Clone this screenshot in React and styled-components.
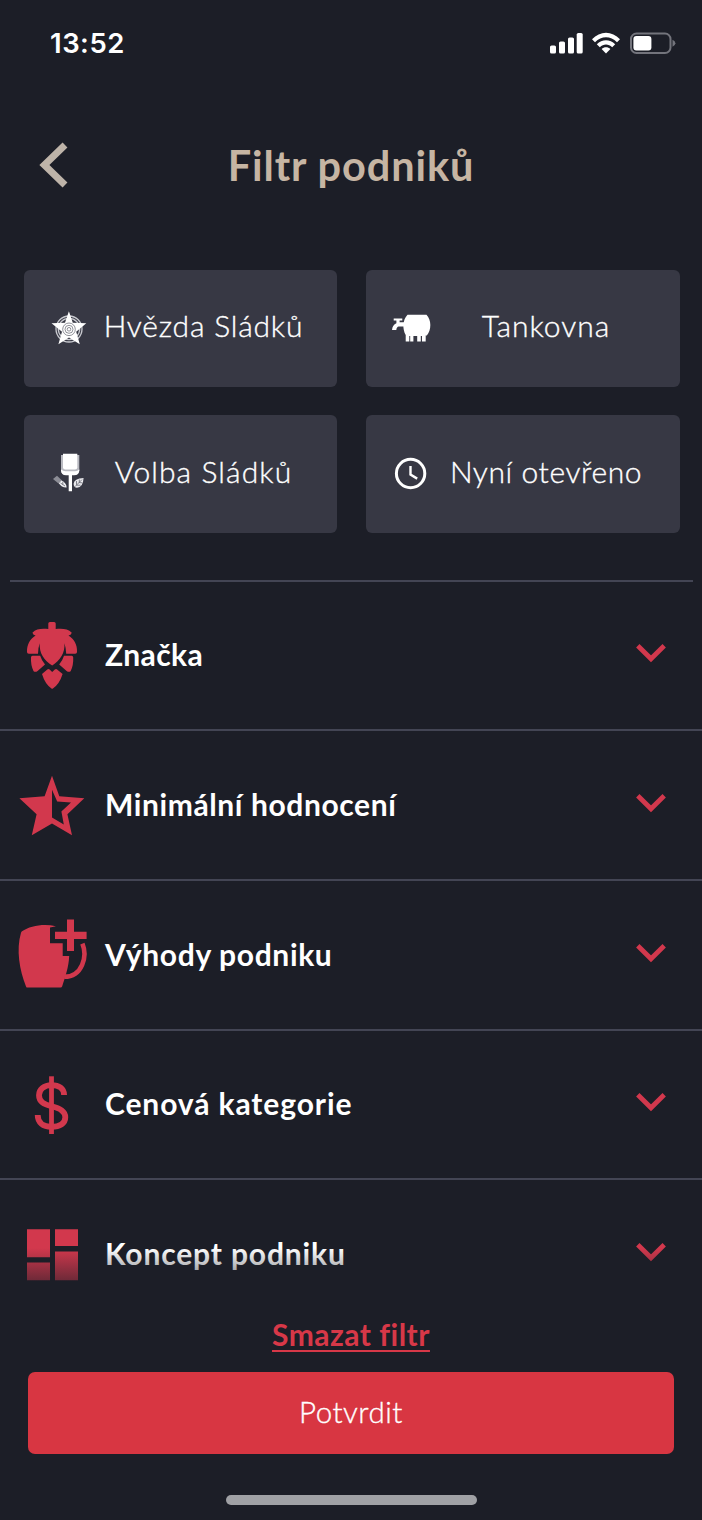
import styled, { createGlobalStyle } from "styled-components";

const GlobalStyle = createGlobalStyle`
  * {
    box-sizing: border-box;
  }
  body {
    margin: 0;
    background: #1c1e27;
  }
  button {
    border: none;
    background: none;
    padding: 0;
    font: inherit;
    color: inherit;
  }
`;

const Screen = styled.div`
  position: relative;
  width: 702px;
  height: 1520px;
  overflow: hidden;
  background: #1c1e27;
  color: #fff;
  font-family: Lato, "Open Sans", sans-serif;
`;

const StatusBar = styled.div`
  display: flex;
  align-items: center;
  justify-content: space-between;
  height: 86px;
  padding: 0 26px 0 50px;
`;

const Time = styled.span`
  font-family: Inter, sans-serif;
  font-size: 27.5px;
  font-weight: 600;
  letter-spacing: 0.5px;
`;

const Header = styled.header`
  display: grid;
  grid-template-columns: 100px 1fr 100px;
  align-items: center;
  height: 157px;
  color: #c6b5a3;
`;

const BackButton = styled.button`
  display: flex;
  padding-left: 38px;
`;

const Title = styled.h1`
  margin: 0;
  text-align: center;
  font-size: 41.5px;
  font-weight: 700;
  letter-spacing: 0.9px;
  white-space: nowrap;
`;

const Tiles = styled.div`
  display: grid;
  grid-template-columns: 313px 314px;
  grid-auto-rows: 117.5px;
  gap: 28px 29px;
  margin: 26.5px 0 0 23.5px;
`;

const Tile = styled.button`
  display: flex;
  align-items: center;
  padding: 0 17px 0 26px;
  border-radius: 6px;
  background: #373844;
`;

const TileIcon = styled.svg`
  flex: none;
  width: 38px;
  height: 40px;
  overflow: visible;
`;

const TileLabel = styled.span`
  flex: 1;
  padding-bottom: 6px;
  text-align: center;
  font-size: 30px;
  font-weight: 300;
  letter-spacing: ${(props) => props.$spacing}px;
  white-space: nowrap;
  -webkit-text-stroke: 0.35px currentColor;
`;

const Sections = styled.ul`
  list-style: none;
  margin: 47px 0 0;
  padding: 0;
`;

const Section = styled.li`
  display: flex;
  align-items: center;
  height: 149.7px;
  margin: 0 ${(props) => (props.$inset ? "9px 0 10px" : "0")};
  padding: 0 ${(props) => (props.$inset ? "27px 0 8px" : "36px 0 18px")};
  border-top: 2px solid #434554;
`;

const SectionIcon = styled.svg`
  flex: none;
  width: 70px;
  height: 72px;
  color: #d2384d;
  overflow: visible;
`;

const SectionLabel = styled.span`
  flex: 1;
  padding: 0 0 2px 17px;
  font-size: 30px;
  font-weight: 700;
  letter-spacing: ${(props) => props.$spacing}px;
`;

const Footer = styled.footer`
  position: absolute;
  left: 0;
  right: 0;
  bottom: 0;
  height: 275px;
  display: flex;
  flex-direction: column;
  align-items: center;
  padding-top: 69px;
  background: linear-gradient(rgba(28, 30, 39, 0) 3px, #1c1e27 62px);
`;

const ClearLink = styled.button`
  height: 40px;
  color: #d73848;
  font-size: 30px;
  font-weight: 700;
  line-height: 40px;
  letter-spacing: 0.5px;
  text-decoration: underline;
  text-decoration-thickness: 2px;
  text-underline-offset: 4px;
  text-decoration-skip-ink: none;
`;

const ConfirmButton = styled.button`
  width: 646px;
  height: 82px;
  margin-top: 18px;
  padding-bottom: 4px;
  border-radius: 7px;
  background: #d83642;
  font-size: 29.5px;
  font-weight: 300;
  letter-spacing: 0.5px;
  -webkit-text-stroke: 0.35px currentColor;
`;

const HomeIndicator = styled.div`
  width: 251px;
  height: 10px;
  margin-top: 41px;
  border-radius: 5px;
  background: #a0a1a5;
`;

function StatusIcons() {
  return (
    <svg width="126" height="22" viewBox="0 0 126 22" fill="#fff">
      <rect x="0" y="13.5" width="6" height="8" rx="1.6" />
      <rect x="9" y="9.5" width="6" height="12" rx="1.6" />
      <rect x="18" y="5.5" width="6" height="16" rx="1.6" />
      <rect x="26.7" y="1" width="6" height="20.5" rx="1.6" />
      <path d="M42 7.2C50 -1.5 62 -1.5 70 7.2L67 10.2C60.5 3.7 51.5 3.7 45 10.2Z" />
      <path d="M46.8 12.2C52 6.8 60 6.8 65.2 12.2L62.2 15.2C58.5 11.5 53.5 11.5 49.8 15.2Z" />
      <path d="M51.6 17C54 14.8 58 14.8 60.4 17L56 21.6Z" />
      <rect x="81" y="1.5" width="39.5" height="19.5" rx="5.5" fill="none" stroke="#73747c" strokeWidth="2" />
      <rect x="83.4" y="4" width="18" height="14.5" rx="3" />
      <path d="M122.5 7.8Q125.4 9 125.4 11.3T122.5 14.8Z" fill="#73747c" />
    </svg>
  );
}

function StarBadgeIcon() {
  return (
    <TileIcon viewBox="0 -1 38 40">
      <g fill="none" stroke="#c9cad0" strokeWidth="1.3">
        <circle cx="19" cy="20" r="13" />
        <circle cx="19" cy="20" r="10.7" />
      </g>
      <path
        d="M18.9 2.3L22.8 13.8L36.3 14.3L26.2 22.8L29.8 35.3L19 28.5L8.4 35.3L12 22.8L1.5 14.3L15 13.8Z"
        fill="#fff"
      />
      <circle cx="19" cy="20.3" r="6.3" fill="#fff" />
      <g fill="none" stroke="#74757f" strokeWidth="0.8">
        <circle cx="19" cy="20.3" r="6.3" />
        <circle cx="19" cy="20.3" r="4" />
        <circle cx="19" cy="20.3" r="1.8" />
      </g>
    </TileIcon>
  );
}

function TankIcon() {
  return (
    <TileIcon viewBox="0 -1 38 40" fill="#fff">
      <path d="M15.5 5.7H34.5C39.6 11 39.6 21 34.8 26.5H33.7V32.5H30V27H28.8V32.5H25.2V27H21.4V32.5H18.2V27H17.3V32.5H13.7V26C10.4 20 10.4 11 15.5 5.7Z" />
      <path d="M1.7 9.6H10.3V11.6H7.6V13.2H12V17.6H6.6C5.6 17.6 4.5 19 4.3 20.9H0C0.4 17.6 1.8 15.4 4.4 14.3V11.6H1.7Z" />
    </TileIcon>
  );
}

function GlassIcon() {
  return (
    <TileIcon viewBox="0 1 38 40">
      <path d="M11 2H29.3V17.5Q29.3 22 24 22H16.5Q11 22 11 17.5Z" fill="#b9bac1" />
      <path d="M13 0.7H27.3V14.5Q27.3 16.6 25 16.6H15.3Q13 16.6 13 14.5Z" fill="#fff" />
      <path d="M11 16.5Q13 18.3 15.5 18.3H25Q27.5 18.3 29.3 16.5V17.5Q28.8 22 24 22.3H22V38.3H18.7V22.3H16Q11.5 22 11 17.5Z" fill="#fff" />
      <path d="M3 26L7 22.8L12 27.5L8.5 30.5Z" fill="#8c8d96" />
      <path d="M8.8 30.2L11.5 27.4Q16.5 29.8 16.6 34.4Q11.6 34.6 8.8 30.2Z" fill="#f0f0f3" />
      <path d="M33.6 25Q24 25.5 23.6 31Q23.8 34.6 27 34.8Q33 34.5 33.6 25Z" fill="#e9e9ed" />
      <path d="M10.5 30L15 33M12.8 28.8V31.5M25 33.6L32 26.6M26.5 28V31.8M29.3 26.6V29.6L32.3 29.8M26.5 32.2H30.5" fill="none" stroke="#555662" strokeWidth="0.7" />
    </TileIcon>
  );
}

function ClockIcon() {
  return (
    <TileIcon viewBox="0.4 0 38 40" fill="none" stroke="#fff">
      <circle cx="19" cy="19.5" r="14.2" strokeWidth="3" />
      <path d="M18.9 12V20.6L25.6 24.6" strokeWidth="2.4" />
    </TileIcon>
  );
}

function HopIcon() {
  return (
    <SectionIcon viewBox="0 0 70 72" fill="currentColor">
      <path d="M30.3 10V4.6Q30.3 3 31.9 3H36.1Q37.7 3 37.7 4.6V10C44 9.4 50 9.6 53.8 13.8Q53 16.2 50.5 16.6C56 20 59.4 26 59 32.9Q59 34.7 57.2 34.7H48.2Q48 29 46.4 24.3C47.3 34 42 41.5 34.2 46.4C26 41.5 20.9 34 21.8 24.3Q20 29 20 34.7H10.8Q9 34.7 9 32.9C8.8 26 12 20 17.6 16.6Q15.2 16.2 14.4 13.8C18 9.6 24 9.4 30.3 10Z" />
      <path d="M14.5 36.8H22.2Q23.6 41.5 27 45.5L19.6 52Q17.3 53.6 15.6 52.2Q12.6 46.5 13 38.3Q13.1 36.8 14.5 36.8Z" />
      <path d="M53.7 36.8H46Q44.6 41.5 41.2 45.5L48.6 52Q50.9 53.6 52.6 52.2Q55.6 46.5 55.2 38.3Q55.1 36.8 53.7 36.8Z" />
      <path d="M24 55L29.3 50.4Q30.5 49.6 31.6 50.6L34.2 53L36.8 50.6Q38 49.6 39.1 50.4L44.6 55Q41.5 65 34.9 69.6Q34.2 70 33.5 69.6Q27 65 24 55Z" />
    </SectionIcon>
  );
}

function HalfStarIcon() {
  return (
    <SectionIcon viewBox="0 0 70 72" fill="currentColor" fillRule="evenodd">
      <path d="M34 6.8L41.3 27.3L66.3 29.2L49.4 45.3L54 66.2L34 54.4L13.8 66.2L18.6 45.3L1.4 29.2L26.6 27.3ZM34 20.8V48.6L45.8 55.6L43.4 42.6L53 33.4L39.2 32.4Z" />
    </SectionIcon>
  );
}

function MugPlusIcon() {
  return (
    <SectionIcon viewBox="0 0 70 72" fill="currentColor">
      <path d="M4 12.3C12 6.6 26 4.2 38 7.2L32 8.6V24.3H44.7V37H51.2C50.8 48 47.2 58 44.2 67.2Q43.8 68.6 42.6 68.6H9.6Q8.4 68.6 8 67.4C1.5 51 -2 31 3 13.8Q3.2 12.8 4 12.3Z" />
      <path d="M49 0.6H56V12.8H68.6V20H56V32H49V20H37V12.8H49Z" />
      <path d="M64.4 24.6C69.6 37 64.5 57.8 46.3 57.8" fill="none" stroke="currentColor" strokeWidth="4.6" />
    </SectionIcon>
  );
}

function DollarIcon() {
  return (
    <SectionIcon viewBox="0 0 70 72" fill="none" stroke="currentColor">
      <path
        d="M46.1 27C46.1 20.5 41 17.2 33.5 17.2C26 17.2 21 21.5 21 27.3C21 33.8 26 36.3 33.5 38.3C42 40.5 47.3 43 47.3 49.3C47.3 55.3 42 58.8 33.5 58.8C25 58.8 19.7 54.5 19.7 47"
        strokeWidth="5.8"
      />
      <path d="M33.5 8.3V66" strokeWidth="4.8" />
    </SectionIcon>
  );
}

function BlocksIcon() {
  return (
    <SectionIcon viewBox="0 0 70 72" fill="currentColor">
      <path d="M9 11.2H32V39.2H9ZM37 11.2H60V28H37ZM9 44.5H32V62.2H9ZM37 33.4H60V62.2H37Z" />
    </SectionIcon>
  );
}

function Chevron() {
  return (
    <svg width="30" height="22" viewBox="0 0 30 22" fill="none" stroke="#d2384d" strokeWidth="4.8">
      <path d="M1.8 1.8L15 14.8L28.2 1.8" />
    </svg>
  );
}

const tiles = [
  { label: "Hvězda Sládků", Icon: StarBadgeIcon, spacing: 0.8 },
  { label: "Tankovna", Icon: TankIcon, spacing: 1 },
  { label: "Volba Sládků", Icon: GlassIcon, spacing: 1.1 },
  { label: "Nyní otevřeno", Icon: ClockIcon, spacing: 0.6 },
];

const sections = [
  { label: "Značka", Icon: HopIcon, spacing: 0.4 },
  { label: "Minimální hodnocení", Icon: HalfStarIcon, spacing: 0.6 },
  { label: "Výhody podniku", Icon: MugPlusIcon, spacing: 0.65 },
  { label: "Cenová kategorie", Icon: DollarIcon, spacing: 0.9 },
  { label: "Koncept podniku", Icon: BlocksIcon, spacing: 0.85 },
];

function App() {
  return (
    <Screen>
      <GlobalStyle />
      <StatusBar>
        <Time>13:52</Time>
        <StatusIcons />
      </StatusBar>
      <Header>
        <BackButton aria-label="Zpět">
          <svg width="30" height="46" viewBox="0 0 30 46" fill="none" stroke="#beb4a9" strokeWidth="7">
            <path d="M27 3L6.4 23L27 43" />
          </svg>
        </BackButton>
        <Title>Filtr podniků</Title>
      </Header>
      <Tiles>
        {tiles.map(({ label, Icon, spacing }) => (
          <Tile key={label}>
            <Icon />
            <TileLabel $spacing={spacing}>{label}</TileLabel>
          </Tile>
        ))}
      </Tiles>
      <Sections>
        {sections.map(({ label, Icon, spacing }, i) => (
          <Section key={label} $inset={i === 0}>
            <Icon />
            <SectionLabel $spacing={spacing}>{label}</SectionLabel>
            <Chevron />
          </Section>
        ))}
      </Sections>
      <Footer>
        <ClearLink>Smazat filtr</ClearLink>
        <ConfirmButton>Potvrdit</ConfirmButton>
        <HomeIndicator />
      </Footer>
    </Screen>
  );
}

export default App;
